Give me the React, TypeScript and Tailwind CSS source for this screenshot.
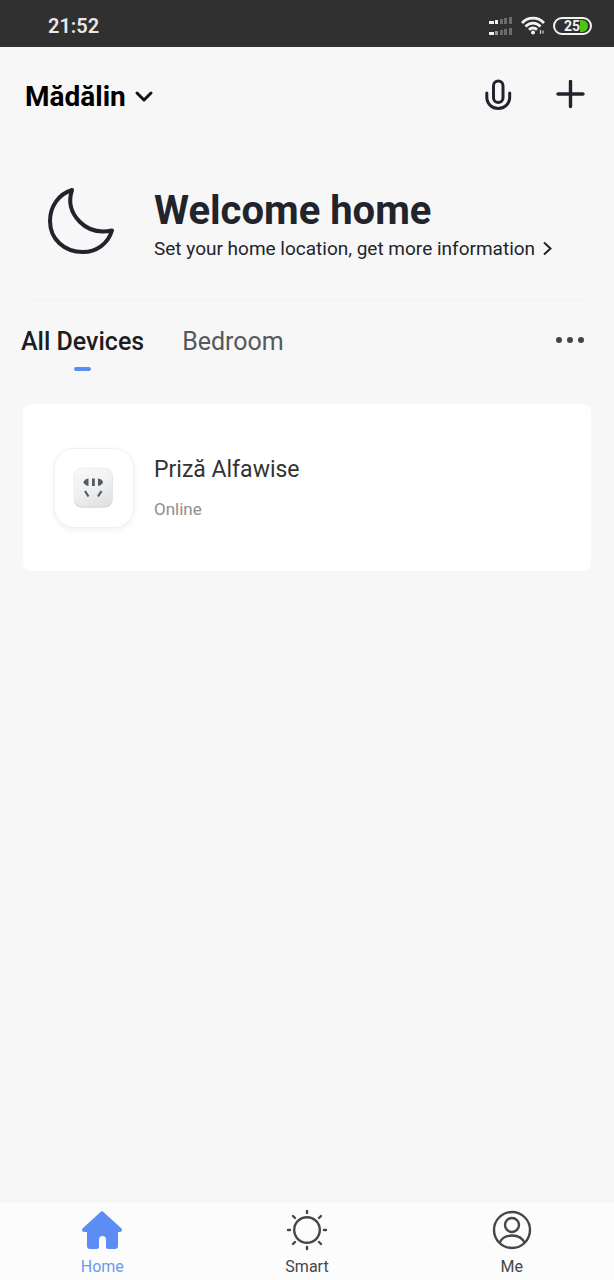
import React from "react";

function SignalIcon() {
  const heights = [3, 4, 5, 6, 7];
  const xs = [0, 6, 11, 15, 20];
  return (
    <svg width="24" height="20" viewBox="0 0 24 20" aria-hidden="true">
      {[8, 19].map((base) =>
        xs.map((x, i) => (
          <rect
            key={`${base}-${i}`}
            x={x}
            y={base - heights[i]}
            width={i < 1 ? 5 : 3}
            height={heights[i]}
            fill={i === 0 || (i === 1 && base === 8) ? "#f2f2f2" : i === 1 ? "#9a9a9a" : "#6c6c6c"}
          />
        )),
      )}
    </svg>
  );
}

function WifiIcon() {
  return (
    <svg width="24" height="19" viewBox="0 0 24 19" fill="none" stroke="#f2f2f2" strokeWidth="2.8" aria-hidden="true">
      <path d="M1 7C7 0.6 17 0.6 23 7" />
      <path d="M4.500 10.500C8.800 6 15.200 6 19.500 10.500" />
      <path d="M8 13.800C10.400 11.400 13.600 11.400 16 13.800" />
      <circle cx="12" cy="16.500" r="2" fill="#f2f2f2" stroke="none" />
      <path d="M19.500 14v4M22 14.500v3" strokeWidth="1.300" stroke="#c9c9c9" />
    </svg>
  );
}

function MoonIcon() {
  return (
    <svg width="70" height="70" viewBox="0 0 70 70" fill="none" stroke="#22242c" strokeWidth="4" strokeLinejoin="round" aria-hidden="true">
      <path d="M26 4C22 16 25 27 34 36C43 45 54 47 66 44.500C62 58 50 66 37 66C18 66 4 53 4 35C4 20 13 8 26 4Z" />
    </svg>
  );
}

function SocketIcon() {
  return (
    <svg width="42" height="42" viewBox="0 0 42 42" aria-hidden="true">
      <defs>
        <linearGradient id="plate" x1="0" y1="0" x2="0.5" y2="1">
          <stop offset="0" stopColor="#fafafa" />
          <stop offset="0.6" stopColor="#f0f0f1" />
          <stop offset="1" stopColor="#e2e3e5" />
        </linearGradient>
      </defs>
      <rect x="1" y="2" width="38.500" height="38.500" rx="8" fill="#bfc1c4" />
      <rect x="1" y="1" width="38.500" height="38.500" rx="8" fill="url(#plate)" stroke="#e6e7e9" strokeWidth="0.7" />
      <g fill="#555b62">
        <path d="M15.500 11.500v7.500C12.500 18.500 10.800 16.500 10.500 15.200C11 13.500 12.500 11.800 15.500 11.500Z" />
        <rect x="19" y="11.500" width="2.800" height="7.500" />
        <path d="M25 11.500v7.500C28 18.500 29.700 16.500 30 15.200C29.700 13.500 28 11.800 25 11.500Z" />
      </g>
      <path d="M12 24l3.500 5.500M28.500 24l-3.500 5.500" stroke="#555b62" strokeWidth="2.200" />
    </svg>
  );
}

function HomeIcon() {
  return (
    <svg width="42" height="42" viewBox="0 0 42 42" fill="#5b8df5" aria-hidden="true">
      <path d="M19.300 3.200Q21 1.500 22.700 3.200L40.500 19.500Q42 22.500 39 23H37V37Q37 40 34 40H27Q25 40 25 38V30.500Q25 27 21.500 27Q18 27 18 30.500V38Q18 40 16 40H9Q6 40 6 37V23H3Q0 22.500 1.500 19.500Z" />
    </svg>
  );
}

function SunIcon() {
  return (
    <svg width="42" height="42" viewBox="0 0 42 42" fill="none" stroke="#44474b" strokeWidth="2.400" strokeLinecap="round" aria-hidden="true">
      <circle cx="21" cy="21" r="12.800" />
      <path d="M21 2v2M21 38v2M2 21h2M38 21h2M7 7l2 2M33 33l2 2M7 35l2-2M33 9l2-2" />
    </svg>
  );
}

function PersonIcon() {
  return (
    <svg width="42" height="42" viewBox="0 0 42 42" fill="none" stroke="#44474b" strokeWidth="2.400" aria-hidden="true">
      <circle cx="21" cy="21" r="18" />
      <circle cx="21" cy="16" r="7" />
      <path d="M8.500 34C10.500 29 15 26.500 21 26.500S31.500 29 33.500 34" />
    </svg>
  );
}

const navItems = [
  { label: "Home", icon: <HomeIcon />, active: true },
  { label: "Smart", icon: <SunIcon />, active: false },
  { label: "Me", icon: <PersonIcon />, active: false },
];

export default function App() {
  return (
    <div className="flex min-h-screen flex-col bg-[#f7f7f7] font-['Roboto','Liberation_Sans',sans-serif] text-[#22242c]">
      <div className="flex h-[47px] items-center justify-between bg-[#303030] pt-1 pr-[22px] pl-12">
        <time className="text-[20px] leading-6 font-semibold text-[#e8e8e8]">21:52</time>
        <div className="flex items-center gap-2">
          <SignalIcon />
          <WifiIcon />
          <div className="flex h-[18px] w-[39px] items-center justify-end rounded-full border-2 border-[#f2f2f2] pr-0.5">
            <span className="text-[14px] leading-4 font-bold text-[#f2f2f2]">25</span>
            <span className="h-3 w-2 rounded-r-full bg-[#4fc414]" />
          </div>
        </div>
      </div>

      <header className="flex h-24 items-center justify-between pr-7 pl-[25px]">
        <button className="flex items-center gap-2 pt-[3px] text-[28px] leading-8 font-bold text-black">
          Mădălin
          <svg width="20" height="20" viewBox="0 0 20 20" fill="none" stroke="#111111" strokeWidth="3" strokeLinecap="round" strokeLinejoin="round" aria-hidden="true">
            <path d="M3 6l7 7 7-7" />
          </svg>
        </button>
        <div className="flex items-center gap-10">
          <button aria-label="Voice">
            <svg width="34" height="34" viewBox="0 0 34 34" fill="none" stroke="#22242c" strokeWidth="3" strokeLinecap="round" aria-hidden="true">
              <rect x="11.500" y="3" width="9.500" height="21.500" rx="4.750" />
              <path d="M4.800 15v4C4.800 26 10 30.500 16.200 30.500S27.700 26 27.700 19v-4" />
            </svg>
          </button>
          <button aria-label="Add">
            <svg width="30" height="30" viewBox="0 0 30 30" fill="none" stroke="#22242c" strokeWidth="3.400" strokeLinecap="round" aria-hidden="true">
              <path d="M14.500 1.500v25M2 14h25" />
            </svg>
          </button>
        </div>
      </header>

      <main className="flex flex-1 flex-col">
        <section className="mx-[29px] flex h-[157px] items-center gap-[38px] border-b border-[#f0f0f0] pl-[17px]">
          <MoonIcon />
          <div className="flex flex-col items-start pt-[7px]">
            <h1 className="text-[40px] leading-[48px] font-bold">Welcome home</h1>
            <a href="#location" className="flex items-center gap-2 text-[19px] leading-7">
              Set your home location, get more information
              <svg width="10" height="16" viewBox="0 0 10 16" fill="none" stroke="#22242c" strokeWidth="2" aria-hidden="true">
                <path d="M1 1.500L7.500 7.500L1 13.500" />
              </svg>
            </a>
          </div>
        </section>

        <nav className="flex items-start justify-between pt-6 pr-[30px] pl-[21px]" aria-label="Rooms">
          <div className="flex gap-[38px] text-[25px] leading-9">
            <button className="flex flex-col items-center gap-[7px] font-medium text-[#1b1d22]">
              All Devices
              <span className="h-1 w-[17px] rounded-full bg-[#5b8df0]" />
            </button>
            <button className="self-start text-[#56585c]">Bedroom</button>
          </div>
          <button className="flex h-8 items-center gap-[5px]" aria-label="More">
            <span className="size-1.5 rounded-full bg-[#444444]" />
            <span className="size-1.5 rounded-full bg-[#444444]" />
            <span className="size-1.5 rounded-full bg-[#444444]" />
          </button>
        </nav>

        <article className="mx-[23px] mt-[33px] flex h-[167px] items-center gap-5 rounded-lg bg-white pl-[31px]">
          <div className="flex size-20 items-center justify-center rounded-[20px] border border-[#f1f1f1] bg-white shadow-[0_2px_6px_rgba(0,0,0,0.06)]">
            <SocketIcon />
          </div>
          <div className="flex flex-col gap-[11px]">
            <h2 className="text-[23px] leading-8 text-[#333333]">Priză Alfawise</h2>
            <p className="text-[17px] leading-6 text-[#8e8e8e]">Online</p>
          </div>
        </article>
      </main>

      <nav className="grid h-[77px] grid-cols-3 bg-[#fcfcfc]" aria-label="Main">
        {navItems.map((item) => (
          <button key={item.label} className="flex flex-col items-center gap-1.5 pt-1.5">
            {item.icon}
            <span className={item.active ? "text-[16px] leading-5 text-[#6d99ee]" : "text-[16px] leading-5 text-[#44474b]"}>
              {item.label}
            </span>
          </button>
        ))}
      </nav>
    </div>
  );
}
